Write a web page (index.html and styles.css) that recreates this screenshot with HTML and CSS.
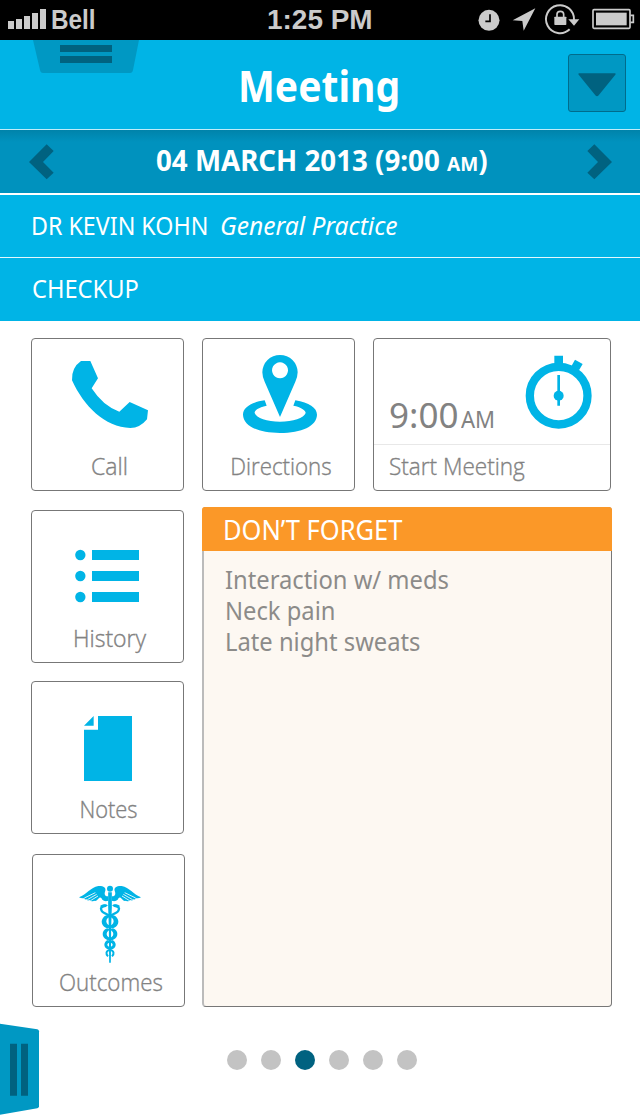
FILE: index.html
```html
<!DOCTYPE html>
<html lang="en">
<head>
<meta charset="utf-8">
<title>Meeting</title>
<link rel="stylesheet" href="styles.css">
</head>
<body>
<div class="screen">
  <div class="status">
    <div class="carrier">
      <svg class="signal" width="38" height="20" viewBox="0 0 38 20"><path d="M0 12h6v8H0zM8 10h6v10H8zM16 7h6v13h-6zM24 4h6v16h-6zM32 0h6v20h-6z"/></svg>
      <span class="fit bell">Bell</span>
    </div>
    <span class="fit clock">1:25 PM</span>
    <svg class="indicators" width="160" height="40" viewBox="470 0 480 120">
      <circle cx="506" cy="61" r="31.5"/>
      <path class="cut" d="M509 43v21h-14" />
      <path d="M577 61 645 25 610 92 606 63z"/>
      <path class="ring" d="M748 88A42 42 0 1 1 761 60"/>
      <path d="M744 58h33l-16 19z"/>
      <rect x="702" y="50" width="36" height="25" rx="2"/>
      <path class="shackle" d="M710 51v-8a10 9 0 0 1 20 0v8"/>
      <rect class="shell" x="818" y="29" width="111" height="56" rx="3"/>
      <rect x="827" y="38" width="92" height="38"/>
      <path class="shell" d="M930 46h9v21h-9"/>
    </svg>
  </div>

  <header class="header">
    <svg class="pull" width="108" height="34" viewBox="0 0 108 34"><path class="tab" d="M0 0h106l-6 30q-.5 3-3 3H10q-2.500 0-3-3L0 0z"/><path class="grip" d="M27 5h52v7H27zM27 16h52v7H27z"/></svg>
    <h1 class="fit title">Meeting</h1>
    <button class="menu" aria-label="Menu"><svg width="38" height="24" viewBox="0 0 114 72"><path d="M4 1h106q5 0 2 4L62 67q-5 6-10 0L2 5Q-1 1 4 1z"/></svg></button>
  </header>

  <div class="datebar">
    <svg width="25" height="36" viewBox="0 0 75 108"><path d="M53 1 74 21 42 54 74 86 53 106 0 54z"/></svg>
    <span class="fit date">04 MARCH 2013 (9:00 <small>AM</small>)</span>
    <svg width="25" height="36" viewBox="0 0 75 108"><path d="M22 1 1 21 33 54 1 86 22 106 75 54z"/></svg>
  </div>
  <div class="row doctor"><span class="fit name">DR KEVIN KOHN</span><span class="fit practice">General Practice</span></div>
  <div class="row reason"><span class="fit checkup">CHECKUP</span></div>

  <main class="board">
    <a class="tile call">
      <svg width="151" height="111" viewBox="36 27 453 333"><path d="M183 93H211L234 145 215 175Q250 229 298 245L329 216 384 241 381 268Q360 294 331 294C254 292 191 228 156 151Q154 113 183 93z"/></svg>
      <span class="label">Call</span>
    </a>
    <a class="tile directions">
      <svg width="151" height="111" viewBox="24 27 453 333"><path fill-rule="evenodd" d="M255 261 209 155Q202 140 202 127A53 52 0 0 1 308 127Q308 140 301 155zM255 97a24 24 0 1 0 .1 0z"/><path d="M209 211 215 227C188 232 178 243 179 249C184 264 216 275 255 275S327 264 332 249C332 241 318 231 295 227L301 211C342 217 366 234 366 254C365 288 320 309 255 309S145 288 144 254C144 233 168 217 209 211z"/></svg>
      <span class="label">Directions</span>
    </a>
    <a class="tile start">
      <div class="when">
        <span class="fit time">9:00</span><span class="fit ampm">AM</span>
        <svg width="68" height="74" viewBox="481 76 204 222"><circle class="dial" cx="582" cy="198" r="86.500"/><path d="M569 78h26v28h-26zM631 90 654 103 643 122 620 110zM578 136h8v92h-8z"/><circle cx="582" cy="198" r="15"/></svg>
      </div>
      <div class="action"><span class="fit go">Start Meeting</span></div>
    </a>
    <a class="tile history">
      <svg width="151" height="111" viewBox="36 33 453 333"><circle cx="181" cy="165" r="15.500"/><circle cx="181" cy="228" r="15.500"/><circle cx="181" cy="291" r="15.500"/><path d="M216 150h141v30H216zM216 213h141v30H216zM216 276h141v30H216z"/></svg>
      <span class="label">History</span>
    </a>
    <a class="tile notes">
      <svg width="151" height="111" viewBox="36 21 453 333"><path d="M234 123H336V318H192V164H234zM221 123V152H192z"/></svg>
      <span class="label">Notes</span>
    </a>
    <a class="tile outcomes">
      <svg width="151" height="111" viewBox="39 30 453 333">
        <circle cx="270" cy="131" r="9"/>
        <path d="M264.500 142h11v45l-2 60-1 106h-5l-1-106-2-60z"/>
        <path fill-rule="evenodd" d="M270 209a25 21 0 1 0 .1 0zM270 217a11 12 0 1 1-.1 0zM270 248a22 19 0 1 0 .1 0zM270 256a10 11 0 1 1-.1 0zM270 284a17 15 0 1 0 .1 0zM270 293a8 6 0 1 1-.1 0z"/>
        <g id="half">
          <path d="M265 154C252 154 253 145 256 137C259 127 249 122 235 123C211 127 201 148 177 157Q184 161 194 159Q190 164 201 163Q199 168 211 165Q212 171 223 167Q227 171 235 161Q242 152 247 164Q254 171 265 167z"/>
          <path class="feather" d="M193 159 226 143M202 164 230 148M213 166 234 153"/>
          <path class="snake" d="M259 182Q247 180 243 190Q243 201 255 205L270 213"/>
          <path d="M240 183Q250 174 264 181Q257 189 246 188z"/>
          <path class="tail" d="M270 314C257 318 257 327 264 334"/>
        </g>
        <use href="#half" transform="matrix(-1 0 0 1 540 0)"/>
      </svg>
      <span class="label">Outcomes</span>
    </a>
    <section class="reminders">
      <h2><span class="fit forget">DON’T FORGET</span></h2>
      <ul>
        <li><span class="fit">Interaction w/ meds</span></li>
        <li><span class="fit">Neck pain</span></li>
        <li><span class="fit">Late night sweats</span></li>
      </ul>
    </section>
  </main>

  <footer class="footer">
    <svg class="drawer" width="40" height="92" viewBox="0 0 120 276"><path class="tab" d="M0 2 112 19q5 1 5 6V250q0 5-5 6L0 275z"/><path class="grip" d="M30 62h21v156H30zM63 62h21v156H63z"/></svg>
    <div class="dots"><i></i><i></i><i class="on"></i><i></i><i></i><i></i></div>
  </footer>
</div>
</body>
</html>
```
FILE: styles.css
```css
* { box-sizing: border-box; }
body { margin: 0; background: #fff; font-family: "Noto Sans", "Open Sans", sans-serif; }
.screen { width: 640px; height: 1115px; overflow: hidden; background: #fff; display: flex; flex-direction: column; }
svg { display: block; flex: none; }
/* Slightly condensed text */
.fit { display: inline-block; white-space: pre; transform-origin: 0 50%; }

.status { height: 40px; background: #000; color: #cbcbcb; display: flex; font: bold 27px/40px "Liberation Sans", Arial, sans-serif; }
.carrier { width: 267px; padding-left: 8px; display: flex; gap: 5px; }
.bell { transform: scaleX(.9); }
.signal { margin-top: 9px; fill: #cbcbcb; }
.clock { flex: 1; transform: scaleX(1.035); }
.indicators { margin-right: 3px; fill: #cbcbcb; }
.cut { fill: none; stroke: #000; stroke-width: 5; }
.ring { fill: none; stroke: #cbcbcb; stroke-width: 6; }
.shackle { fill: none; stroke: #cbcbcb; stroke-width: 5; }
.shell { fill: none; stroke: #cbcbcb; stroke-width: 5; }

.header { height: 90px; background: #00b4e6; border-bottom: 1px solid #bfecf9; display: flex; align-items: flex-start; color: #fff; }
.pull { margin-left: 33px; }
.tab { fill: #0098c3; }
.grip { fill: #006280; }
.title { margin: 0 0 0 97px; width: 330px; font-size: 43px; line-height: 91px; font-weight: bold; transform: scaleX(.908); }
.menu { width: 58px; height: 58px; margin: 14px 0 0; padding: 4px 0 0; border: 1px solid #006c8c; border-radius: 3px; background: #0098c3; display: flex; justify-content: center; align-items: center; }
.menu svg { fill: #006280; }

.datebar { height: 65px; background: linear-gradient(#0083aa, #0092be 12px); border-bottom: 2px solid #fff; color: #fff; display: flex; align-items: center; padding: 0 28px 0 29px; }
.datebar svg { fill: #006280; }
.date { margin: 0 0 0 102px; width: 431px; font-size: 29px; font-weight: bold; line-height: 61px; transform: scaleX(.955); }
.date small { font-size: 20px; }
.row { height: 63px; background: #00b4e6; color: #fff; font-size: 25px; line-height: 61px; padding-left: 31px; display: flex; }
.doctor { border-bottom: 1px solid #e4f7fd; }
.name { width: 189px; transform: scaleX(.93); }
.practice { font-style: italic; line-height: 60px; transform: scaleX(.983); }
.checkup { margin-left: 1px; transform: scaleX(.945); }

.board { height: 669px; margin: 17px 28px 0 31px; display: grid; grid-template-columns: 153px 153px 239px; column-gap: 18px; grid-template-rows: 153px 153px 153px 153px; row-gap: 19px; }
.tile { width: 153px; height: 153px; border: 1px solid #777; border-radius: 4px; color: #828282; background: #fff; }
.tile svg { fill: #00b4e6; }
.label, .go { font: 300 23px/30px "Open Sans", "Noto Sans", sans-serif; -webkit-text-stroke: .35px #828282; }
.label { display: block; text-align: center; padding: 1px 0 0 5px; transform: scaleX(.97); }
.call .label, .history .label { padding-left: 4px; transform: none; }
.notes .label { padding-left: 2px; transform: scaleX(.95); }
.start { width: 238px; }
.when { height: 106px; border-bottom: 1px solid #e8e8e8; display: flex; }
.when svg { margin: 16px 0 0 31px; }
.time { width: 72px; font-size: 35px; line-height: 48px; margin: 52px 0 0 15px; }
.ampm { width: 33px; font-size: 24px; line-height: 48px; margin: 56px 0 0; transform: scaleX(.92); }
.go { margin: 6px 0 0 15px; transform: scaleX(.98); }
.dial { fill: none; stroke: #00b4e6; stroke-width: 25; }
.feather { fill: none; stroke: #fff; stroke-width: 2.500; }
.snake { fill: none; stroke: #00b4e6; stroke-width: 7; }
.tail { fill: none; stroke: #00b4e6; stroke-width: 6; }
.history { grid-row: 2; grid-column: 1; }
.notes { grid-row: 3; grid-column: 1; margin-top: -1px; }
.outcomes { grid-row: 4; grid-column: 1; margin-left: 1px; }
.reminders { grid-column: 2 / 4; grid-row: 2 / 5; margin-top: -3px; height: 500px; border: 1px solid #777; border-left: 2px solid #bbb; border-radius: 4px; background: #fdf8f2; }
.reminders h2 { margin: -1px -1px 0 -2px; height: 44px; padding-left: 21px; background: #fb9828; border-radius: 3px 3px 0 0; color: #fff; font-size: 27px; line-height: 45px; font-weight: normal; }
.forget { transform: scaleX(.943); }
.reminders ul { list-style: none; margin: 0; padding: 13px 0 0 21px; color: #8c8b89; font-size: 25px; line-height: 31px; }
.reminders li { height: 31px; }
.reminders li .fit { transform: scaleX(.95); }

.footer { display: flex; align-items: flex-start; margin-top: 16px; }
.dots { display: flex; gap: 14px; margin: 10px 0 0 187px; padding-top: 17px; }
.dots i { width: 20px; height: 20px; border-radius: 50%; background: #c3c3c3; }
.dots .on { background: #006280; }
```
